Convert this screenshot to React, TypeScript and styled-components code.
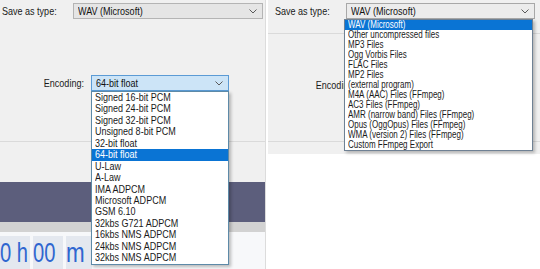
import styled, { createGlobalStyle } from "styled-components";

const GlobalStyle = createGlobalStyle`
  html, body {
    margin: 0;
    padding: 0;
    background: #ffffff;
  }
  body {
    font-family: "Liberation Sans", Arial, sans-serif;
    color: #000;
  }
`;

const encodings = [
  "Signed 16-bit PCM",
  "Signed 24-bit PCM",
  "Signed 32-bit PCM",
  "Unsigned 8-bit PCM",
  "32-bit float",
  "64-bit float",
  "U-Law",
  "A-Law",
  "IMA ADPCM",
  "Microsoft ADPCM",
  "GSM 6.10",
  "32kbs G721 ADPCM",
  "16kbs NMS ADPCM",
  "24kbs NMS ADPCM",
  "32kbs NMS ADPCM"
];

const fileTypes = [
  "WAV (Microsoft)",
  "Other uncompressed files",
  "MP3 Files",
  "Ogg Vorbis Files",
  "FLAC Files",
  "MP2 Files",
  "(external program)",
  "M4A (AAC) Files (FFmpeg)",
  "AC3 Files (FFmpeg)",
  "AMR (narrow band) Files (FFmpeg)",
  "Opus (OggOpus) Files (FFmpeg)",
  "WMA (version 2) Files (FFmpeg)",
  "Custom FFmpeg Export"
];

const Page = styled.div`
  display: flex;
  width: 540px;
  height: 269px;
  overflow: hidden;
`;

const LeftPanel = styled.div`
  position: relative;
  width: 265px;
  display: flex;
  flex-direction: column;
  border-right: 1px solid #dcdcdc;
`;

const Spacer = styled.div`
  width: 2px;
  background: #fff;
`;

const RightPanel = styled.div`
  position: relative;
  flex: 1;
  display: flex;
  flex-direction: column;
  overflow: hidden;
`;

const DialogArea = styled.div<{ $h: number }>`
  height: ${(p) => p.$h}px;
  background: #f0f0f0;
  display: flex;
  flex-direction: column;
`;

const Row = styled.div<{ $pad: number; $top: number }>`
  display: flex;
  align-items: center;
  padding-left: ${(p) => p.$pad}px;
  margin-top: ${(p) => p.$top}px;
  height: 16px;
`;

// the screenshot is squeezed sideways, so text is narrowed to match
const Squeeze = styled.span<{ $x?: number; $origin?: string }>`
  display: inline-block;
  white-space: nowrap;
  transform: scaleX(${(p) => p.$x ?? 0.82});
  transform-origin: ${(p) => p.$origin || "left"} center;
`;

const Label = styled.div<{ $w: number; $align?: string }>`
  width: ${(p) => p.$w}px;
  font-size: 11px;
  color: #1a1a1a;
  text-align: ${(p) => p.$align || "left"};
  white-space: nowrap;
`;

const Combo = styled.div<{ $w: number; $bg: string; $border: string }>`
  box-sizing: border-box;
  width: ${(p) => p.$w}px;
  height: 16px;
  background: ${(p) => p.$bg};
  border: 1px solid ${(p) => p.$border};
  display: flex;
  align-items: center;
  justify-content: space-between;
  padding: 0 5px 0 4px;
  font-size: 11px;
  color: #111;
`;

const Separator = styled.div<{ $top: number }>`
  margin-top: ${(p) => p.$top}px;
  height: 1px;
  background: #dadada;
`;

const DarkBand = styled.div`
  height: 40px;
  background: #5c5e7c;
`;

const GreyBand = styled.div`
  height: 10px;
  background: #d2d2d2;
`;

const TimerRow = styled.div`
  flex: 1;
  display: flex;
  align-items: flex-end;
  gap: 3px;
  padding-top: 4px;
  background: #f7f8fa;
`;

const TimeBox = styled.div<{ $w: number }>`
  width: ${(p) => p.$w}px;
  height: 33px;
  overflow: hidden;
  background: #e4e8ef;
  font-size: 28px;
  line-height: 33px;
  color: #2f66d0;
`;

const List = styled.div<{ $left: number; $top: number; $w: number; $border: string }>`
  position: absolute;
  left: ${(p) => p.$left}px;
  top: ${(p) => p.$top}px;
  width: ${(p) => p.$w}px;
  box-sizing: border-box;
  background: #fff;
  border: 1px solid ${(p) => p.$border};
  box-shadow: 2px 2px 3px rgba(0, 0, 0, 0.25);
`;

const Item = styled.div<{ $h: number; $size: number; $selected?: boolean }>`
  height: ${(p) => p.$h}px;
  line-height: ${(p) => p.$h}px;
  font-size: ${(p) => p.$size}px;
  padding-left: 3px;
  white-space: nowrap;
  overflow: hidden;
  color: ${(p) => (p.$selected ? "#fff" : "#1a1a1a")};
  background: ${(p) => (p.$selected ? "#0a74d4" : "transparent")};
`;

const Chevron = () => (
  <svg width="8" height="5" viewBox="0 0 8 5">
    <path d="M0.5 0.5 L4 4 L7.5 0.5" fill="none" stroke="#5a5a5a" strokeWidth="1" />
  </svg>
);

export default function App() {
  return (
    <>
      <GlobalStyle />
      <Page>
        <LeftPanel>
          <DialogArea $h={182}>
            <Row $pad={2} $top={3}>
              <Label $w={71}>
                <Squeeze>Save as type:</Squeeze>
              </Label>
              <Combo $w={190} $bg="#e5e5e5" $border="#b4b4b4">
                <Squeeze>WAV (Microsoft)</Squeeze>
                <Chevron />
              </Combo>
            </Row>
            <Row $pad={0} $top={56}>
              <Label $w={84} $align="right">
                <Squeeze $origin="right">Encoding:</Squeeze>
              </Label>
              <span style={{ width: 7 }} />
              <Combo $w={138} $bg="#cce4f7" $border="#5b9bd5">
                <Squeeze>64-bit float</Squeeze>
                <Chevron />
              </Combo>
            </Row>
            <Separator $top={50} />
          </DialogArea>
          <DarkBand />
          <GreyBand />
          <TimerRow>
            <TimeBox $w={30}>
              <Squeeze $x={0.72}>0&nbsp;h</Squeeze>
            </TimeBox>
            <TimeBox $w={30}>
              <Squeeze $x={0.72}>00</Squeeze>
            </TimeBox>
            <TimeBox $w={26}>
              <Squeeze $x={0.8}>m</Squeeze>
            </TimeBox>
          </TimerRow>
          <List $left={91} $top={91} $w={138} $border="#5d8aa8">
            {encodings.map((e) => (
              <Item key={e} $h={11.45} $size={11} $selected={e === "64-bit float"}>
                <Squeeze>{e}</Squeeze>
              </Item>
            ))}
          </List>
        </LeftPanel>
        <Spacer />
        <RightPanel>
          <DialogArea $h={154}>
            <Row $pad={7} $top={3}>
              <Label $w={71}>
                <Squeeze>Save as type:</Squeeze>
              </Label>
              <Combo $w={189} $bg="#ececec" $border="#a8a8a8">
                <Squeeze>WAV (Microsoft)</Squeeze>
                <Chevron />
              </Combo>
            </Row>
            <Separator $top={14} />
            <Row $pad={0} $top={43}>
              <Label $w={88} $align="right">
                <Squeeze $origin="right">Encoding:</Squeeze>
              </Label>
            </Row>
            <Separator $top={48} />
          </DialogArea>
          <List $left={76} $top={19} $w={189} $border="#6f8194">
            {fileTypes.map((f) => (
              <Item key={f} $h={10} $size={10} $selected={f === "WAV (Microsoft)"}>
                <Squeeze $x={0.8}>{f}</Squeeze>
              </Item>
            ))}
          </List>
        </RightPanel>
      </Page>
    </>
  );
}
